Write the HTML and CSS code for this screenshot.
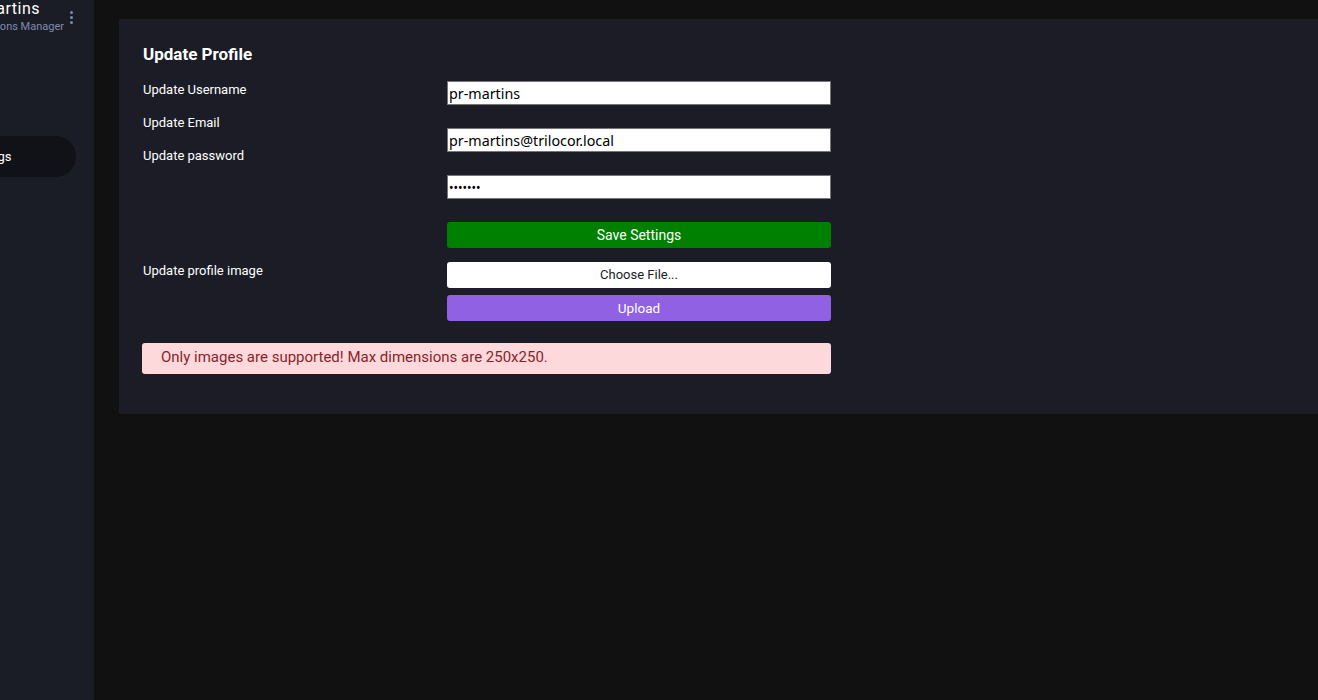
FILE: index.html
```html
<!DOCTYPE html>
<html>
<head>
<meta charset="utf-8">
<link rel="stylesheet" href="styles.css">
</head>
<body>
<div class="app">
  <aside class="sidebar">
    <div class="side-inner">
      <div class="user">
        <div class="user-text">
          <div class="user-name">P. Martins</div>
          <div class="user-role">Operations Manager</div>
        </div>
        <span class="kebab"><i></i><i></i><i></i></span>
      </div>
      <nav class="nav">
        <div class="nav-item active">Settings</div>
      </nav>
    </div>
  </aside>
  <main class="main">
    <section class="card">
      <h2 class="card-title">Update Profile</h2>
      <div class="form">
        <div class="labels">
          <label>Update Username</label>
          <label>Update Email</label>
          <label>Update password</label>
        </div>
        <div class="fields">
          <input class="field" type="text" value="pr-martins">
          <input class="field" type="text" value="pr-martins@trilocor.local">
          <input class="field pw" type="text" value="•••••••">
          <button class="btn btn-save">Save Settings</button>
        </div>
        <div class="labels img-label">
          <label>Update profile image</label>
        </div>
        <div class="fields file-fields">
          <div class="btn btn-file">Choose File...</div>
          <button class="btn btn-upload">Upload</button>
        </div>
      </div>
      <div class="alert">Only images are supported! Max dimensions are 250x250.</div>
    </section>
  </main>
</div>
</body>
</html>
```

FILE: styles.css
```css
* { box-sizing: border-box; }
html, body { margin: 0; padding: 0; height: 100%; }
body {
  background: #111111;
  font-family: Roboto, "Liberation Sans", sans-serif;
  color: #ffffff;
  overflow: hidden;
}
.app {
  display: flex;
  height: 700px;
}
.sidebar {
  width: 94px;
  flex: 0 0 94px;
  background: #1b1d26;
  overflow: hidden;
}
.side-inner {
  width: 200px;
  margin-left: -126px;
}
.user {
  display: flex;
  align-items: flex-start;
  justify-content: flex-end;
  gap: 6px;
  padding-right: 1px;
  height: 50px;
}
.user-name {
  font-size: 16px;
  line-height: 18px;
  letter-spacing: 0.5px;
  color: #ffffff;
  white-space: nowrap;
}
.user-role {
  font-size: 11px;
  line-height: 15px;
  color: #7f8bab;
  margin-top: 1px;
  white-space: nowrap;
}
.kebab {
  display: flex;
  flex-direction: column;
  gap: 2px;
  margin-top: 11px;
}
.kebab i {
  display: block;
  width: 3px;
  height: 3px;
  border-radius: 50%;
  background: #7f8bab;
}
.nav {
  margin-top: 86px;
}
.nav-item {
  height: 41px;
  width: 202px;
  border-radius: 0 21px 21px 0;
  background: #111217;
  font-size: 13px;
  line-height: 41px;
  padding-left: 90px;
  color: #ffffff;
}
.main {
  flex: 1;
  padding: 19px 0 0 25px;
  min-width: 0;
}
.card {
  background: #1b1c25;
  width: 1300px;
  padding: 25px 24px 40px 24px;
}
.card-title {
  margin: 0 0 16px 0;
  font-size: 17px;
  line-height: 21px;
  font-weight: 700;
}
.form {
  display: grid;
  grid-template-columns: 304px 384px;
  row-gap: 14px;
}
.labels {
  display: flex;
  flex-direction: column;
  gap: 17px;
  padding-top: 1px;
}
.labels label {
  font-size: 13px;
  line-height: 16px;
  color: #ffffff;
}
.img-label { padding-top: 1px; }
.fields {
  display: flex;
  flex-direction: column;
  gap: 23px;
}
.file-fields { gap: 7px; }
.field {
  height: 24px;
  width: 384px;
  margin: 0;
  border: 1px solid #767676;
  background: #ffffff;
  padding: 0 1px;
  font-family: "Noto Sans", sans-serif;
  font-size: 14.3px;
  color: #000000;
  outline: none;
}
.pw {
  font-size: 12px;
  letter-spacing: 0;
}
.btn {
  height: 26px;
  width: 384px;
  border: none;
  border-radius: 3px;
  font-family: Roboto, sans-serif;
  font-size: 14px;
  line-height: 26px;
  text-align: center;
  padding: 0;
  margin: 0;
}
.btn-save { background: #008000; color: #ffffff; }
.btn-file { background: #ffffff; color: #1b1c25; font-size: 13px; }
.btn-upload { background: #9061e3; color: #ffffff; font-size: 13.5px; }
.alert {
  margin-top: 22px;
  margin-left: -1px;
  width: 689px;
  height: 31px;
  border-radius: 3px;
  background: #fdd9dc;
  color: #8b1e2a;
  font-size: 15px;
  line-height: 29px;
  padding-left: 19px;
}
```
